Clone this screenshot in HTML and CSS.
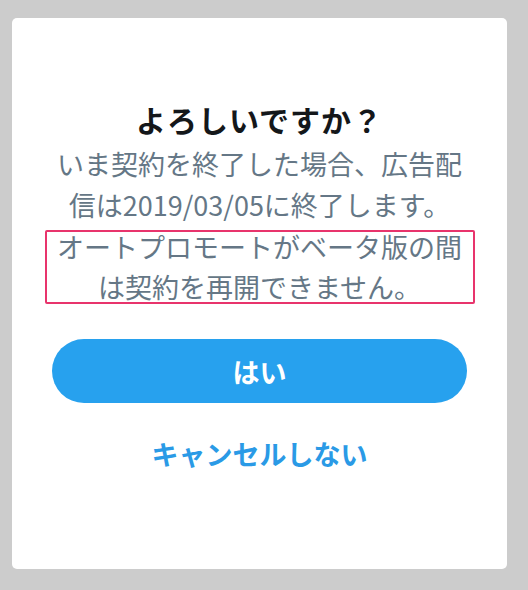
FILE: index.html
```html
<!DOCTYPE html>
<html lang="ja">
<head>
<meta charset="utf-8">
<title>確認</title>
<link rel="stylesheet" href="styles.css">
</head>
<body>
<div class="dialog">
  <h1 class="title">よろしいですか？</h1>
  <p class="message">いま契約を終了した場合、広告配信は2019/03/05に終了します。</p>
  <div class="highlight">
    <p class="highlight-text">オートプロモートがベータ版の間は契約を再開できません。</p>
  </div>
  <button class="btn-primary" type="button">はい</button>
  <button class="btn-link" type="button">キャンセルしない</button>
</div>
</body>
</html>
```

FILE: styles.css
```css
html, body {
  margin: 0;
  padding: 0;
  background: #cccccc;
}
body {
  font-family: "Noto Sans CJK JP", "Noto Sans", sans-serif;
  padding: 18px 21px 21px 12px;
}
.dialog {
  width: 495px;
  height: 551px;
  box-sizing: border-box;
  background: #ffffff;
  border-radius: 5px;
  padding-top: 83px;
  display: flex;
  flex-direction: column;
  align-items: center;
}
.title {
  margin: 0;
  font-size: 30px;
  line-height: 36px;
  font-weight: 700;
  color: #14171a;
  letter-spacing: 1px;
  text-align: center;
}
.message {
  margin: 6px 0 0;
  width: 425px;
  font-size: 27px;
  line-height: 41px;
  color: #657786;
  text-align: center;
}
.highlight {
  margin-top: 5px;
  width: 430px;
  box-sizing: border-box;
  border: 2.5px solid #e8346c;
  border-radius: 2px;
}
.highlight-text {
  margin: -5px 0;
  font-size: 27px;
  line-height: 40px;
  color: #657786;
  text-align: center;
}
.btn-primary {
  margin-top: 35px;
  width: 415px;
  height: 64px;
  border: none;
  border-radius: 32px;
  background: #27a1ee;
  color: #ffffff;
  font-family: inherit;
  font-size: 27px;
  font-weight: 700;
  padding: 0;
}
.btn-link {
  margin-top: 31px;
  border: none;
  background: none;
  padding: 0;
  font-family: inherit;
  font-size: 27px;
  line-height: 40px;
  font-weight: 700;
  color: #2a9ae6;
}
```
